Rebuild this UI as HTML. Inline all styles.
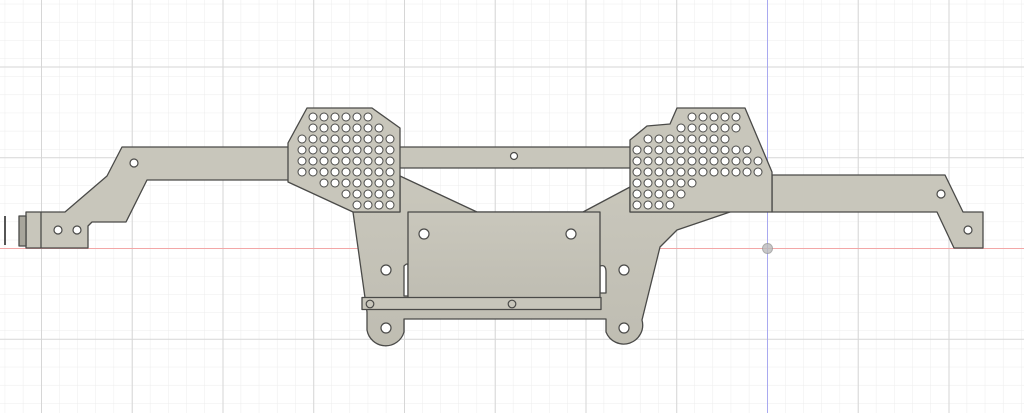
<!DOCTYPE html>
<html><head><meta charset="utf-8"><style>
html,body{margin:0;padding:0;background:#fff;width:1024px;height:413px;overflow:hidden}
svg{display:block}
</style></head><body>
<svg width="1024" height="413" viewBox="0 0 1024 413" xmlns="http://www.w3.org/2000/svg">
<defs>
<pattern id="minor" x="4.7" y="3.8" width="18.15" height="18.15" patternUnits="userSpaceOnUse">
<path d="M0 0H18.15M0 0V18.15" stroke="#ececec" stroke-width="1" fill="none"/>
</pattern>
<pattern id="major" x="41" y="66.5" width="90.75" height="90.75" patternUnits="userSpaceOnUse">
<path d="M0 0.5H90.75M0.5 0V90.75" stroke="#d6d6d6" stroke-width="1" fill="none"/>
</pattern>
<linearGradient id="g" x1="0" y1="0" x2="0" y2="1">
<stop offset="0" stop-color="#c9c7bc"/><stop offset="1" stop-color="#bfbdb2"/>
</linearGradient>
</defs>
<rect width="1024" height="413" fill="url(#minor)"/>
<rect width="1024" height="413" fill="url(#major)"/>
<line x1="0" y1="248.5" x2="1024" y2="248.5" stroke="#f3a7a7" stroke-width="1"/>
<line x1="767.5" y1="0" x2="767.5" y2="413" stroke="#a9a9f0" stroke-width="1"/>
<g stroke="#4a4a48" stroke-width="1.3" stroke-linejoin="round" fill="#c8c6bb">
<!-- center lower piece -->
<path d="M353 212 L367 312 L367 330 A19 19 0 0 0 404 332 L404 319 L606 319 L606 332 A19 19 0 0 0 642 320 L660 247 L677 230 L730 212 L630 212 L630 187 L583 212 L477 212 L400 176 L400 212 Z" fill="url(#g)"/>
<!-- top bar -->
<rect x="398" y="147" width="234" height="21"/>
<!-- left arm -->
<path d="M26 212 L65 212 L107 176 L122 147 L290 147 L290 180 L147 180 L126 222 L92 222 L88 226 L88 248 L26 248 Z"/>
<line x1="41" y1="212" x2="41" y2="248"/>
<rect x="19" y="216" width="7" height="30" fill="#a7a59b"/>
<line x1="5" y1="216" x2="5" y2="245" stroke="#555" stroke-width="2"/>
<!-- left honeycomb plate -->
<path d="M307 108 L372 108 L400 128 L400 212 L353 212 L288 182 L288 143 Z"/>
<!-- right arm -->
<path d="M772 175 L945 175 L963 212 L983 212 L983 248 L954 248 L937 212 L772 212 Z"/>
<!-- right honeycomb plate -->
<path d="M677 108 L745 108 L772 172 L772 212 L630 212 L630 140 L647 126 L670 124 Z"/>
<!-- center box -->
<path d="M404 266 Q408 262 408 266 L408 296 L404 296 Z M600 266 Q606 264 606 272 L606 293 L600 293 Z" fill="#fff"/>
<rect x="408" y="212" width="192" height="86" fill="url(#g)"/>
<rect x="362" y="297.5" width="239" height="12"/>
</g>
<g fill="#fff" stroke="#4a4a48" stroke-width="1.2">
<circle cx="58" cy="230" r="4"/><circle cx="77" cy="230" r="4"/><circle cx="134" cy="163" r="4"/>
<circle cx="514" cy="156" r="3.5"/>
<circle cx="941" cy="194" r="4"/><circle cx="968" cy="230" r="4"/>
<circle cx="424" cy="234" r="5"/><circle cx="571" cy="234" r="5"/>
<circle cx="386" cy="270" r="5"/><circle cx="624" cy="270" r="5"/>
<circle cx="386" cy="328" r="5"/><circle cx="624" cy="328" r="5"/>
</g>
<g fill="none" stroke="#4a4a48" stroke-width="1.2">
<circle cx="370" cy="304" r="3.8"/><circle cx="512" cy="304" r="3.8"/>
</g>
<g fill="#fff" stroke="#4a4a48" stroke-width="1">
<!-- left plate holes -->
<g id="L"></g>
</g>
<g fill="#fff" stroke="#4a4a48" stroke-width="1">
<circle cx="313" cy="117" r="4"/><circle cx="324" cy="117" r="4"/><circle cx="335" cy="117" r="4"/><circle cx="346" cy="117" r="4"/><circle cx="357" cy="117" r="4"/><circle cx="368" cy="117" r="4"/>
<circle cx="313" cy="128" r="4"/><circle cx="324" cy="128" r="4"/><circle cx="335" cy="128" r="4"/><circle cx="346" cy="128" r="4"/><circle cx="357" cy="128" r="4"/><circle cx="368" cy="128" r="4"/><circle cx="379" cy="128" r="4"/>
<circle cx="302" cy="139" r="4"/><circle cx="313" cy="139" r="4"/><circle cx="324" cy="139" r="4"/><circle cx="335" cy="139" r="4"/><circle cx="346" cy="139" r="4"/><circle cx="357" cy="139" r="4"/><circle cx="368" cy="139" r="4"/><circle cx="379" cy="139" r="4"/><circle cx="390" cy="139" r="4"/>
<circle cx="302" cy="150" r="4"/><circle cx="313" cy="150" r="4"/><circle cx="324" cy="150" r="4"/><circle cx="335" cy="150" r="4"/><circle cx="346" cy="150" r="4"/><circle cx="357" cy="150" r="4"/><circle cx="368" cy="150" r="4"/><circle cx="379" cy="150" r="4"/><circle cx="390" cy="150" r="4"/>
<circle cx="302" cy="161" r="4"/><circle cx="313" cy="161" r="4"/><circle cx="324" cy="161" r="4"/><circle cx="335" cy="161" r="4"/><circle cx="346" cy="161" r="4"/><circle cx="357" cy="161" r="4"/><circle cx="368" cy="161" r="4"/><circle cx="379" cy="161" r="4"/><circle cx="390" cy="161" r="4"/>
<circle cx="302" cy="172" r="4"/><circle cx="313" cy="172" r="4"/><circle cx="324" cy="172" r="4"/><circle cx="335" cy="172" r="4"/><circle cx="346" cy="172" r="4"/><circle cx="357" cy="172" r="4"/><circle cx="368" cy="172" r="4"/><circle cx="379" cy="172" r="4"/><circle cx="390" cy="172" r="4"/>
<circle cx="324" cy="183" r="4"/><circle cx="335" cy="183" r="4"/><circle cx="346" cy="183" r="4"/><circle cx="357" cy="183" r="4"/><circle cx="368" cy="183" r="4"/><circle cx="379" cy="183" r="4"/><circle cx="390" cy="183" r="4"/>
<circle cx="346" cy="194" r="4"/><circle cx="357" cy="194" r="4"/><circle cx="368" cy="194" r="4"/><circle cx="379" cy="194" r="4"/><circle cx="390" cy="194" r="4"/>
<circle cx="357" cy="205" r="4"/><circle cx="368" cy="205" r="4"/><circle cx="379" cy="205" r="4"/><circle cx="390" cy="205" r="4"/>
<!-- right plate -->
<circle cx="692" cy="117" r="4"/><circle cx="703" cy="117" r="4"/><circle cx="714" cy="117" r="4"/><circle cx="725" cy="117" r="4"/><circle cx="736" cy="117" r="4"/>
<circle cx="681" cy="128" r="4"/><circle cx="692" cy="128" r="4"/><circle cx="703" cy="128" r="4"/><circle cx="714" cy="128" r="4"/><circle cx="725" cy="128" r="4"/><circle cx="736" cy="128" r="4"/>
<circle cx="648" cy="139" r="4"/><circle cx="659" cy="139" r="4"/><circle cx="670" cy="139" r="4"/><circle cx="681" cy="139" r="4"/><circle cx="692" cy="139" r="4"/><circle cx="703" cy="139" r="4"/><circle cx="714" cy="139" r="4"/><circle cx="725" cy="139" r="4"/>
<circle cx="637" cy="150" r="4"/><circle cx="648" cy="150" r="4"/><circle cx="659" cy="150" r="4"/><circle cx="670" cy="150" r="4"/><circle cx="681" cy="150" r="4"/><circle cx="692" cy="150" r="4"/><circle cx="703" cy="150" r="4"/><circle cx="714" cy="150" r="4"/><circle cx="725" cy="150" r="4"/><circle cx="736" cy="150" r="4"/><circle cx="747" cy="150" r="4"/>
<circle cx="637" cy="161" r="4"/><circle cx="648" cy="161" r="4"/><circle cx="659" cy="161" r="4"/><circle cx="670" cy="161" r="4"/><circle cx="681" cy="161" r="4"/><circle cx="692" cy="161" r="4"/><circle cx="703" cy="161" r="4"/><circle cx="714" cy="161" r="4"/><circle cx="725" cy="161" r="4"/><circle cx="736" cy="161" r="4"/><circle cx="747" cy="161" r="4"/><circle cx="758" cy="161" r="4"/>
<circle cx="637" cy="172" r="4"/><circle cx="648" cy="172" r="4"/><circle cx="659" cy="172" r="4"/><circle cx="670" cy="172" r="4"/><circle cx="681" cy="172" r="4"/><circle cx="692" cy="172" r="4"/><circle cx="703" cy="172" r="4"/><circle cx="714" cy="172" r="4"/><circle cx="725" cy="172" r="4"/><circle cx="736" cy="172" r="4"/><circle cx="747" cy="172" r="4"/><circle cx="758" cy="172" r="4"/>
<circle cx="637" cy="183" r="4"/><circle cx="648" cy="183" r="4"/><circle cx="659" cy="183" r="4"/><circle cx="670" cy="183" r="4"/><circle cx="681" cy="183" r="4"/><circle cx="692" cy="183" r="4"/>
<circle cx="637" cy="194" r="4"/><circle cx="648" cy="194" r="4"/><circle cx="659" cy="194" r="4"/><circle cx="670" cy="194" r="4"/><circle cx="681" cy="194" r="4"/>
<circle cx="637" cy="205" r="4"/><circle cx="648" cy="205" r="4"/><circle cx="659" cy="205" r="4"/><circle cx="670" cy="205" r="4"/>
</g>
<circle cx="767.5" cy="248.5" r="5" fill="#bbb" stroke="#999" stroke-width="1" opacity="0.8"/>
</svg>
</body></html>
